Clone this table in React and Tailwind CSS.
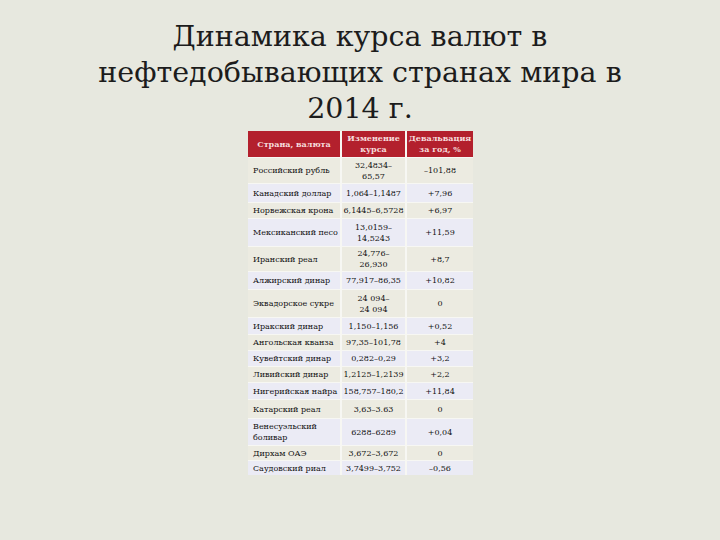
import React from "react";

const rows = [
  { c: "Российский рубль", r: "32,4834–\n65,57", d: "–101,88", h: "h-[25px]" },
  { c: "Канадский доллар", r: "1,064–1,1487", d: "+7,96", h: "h-[18px]" },
  { c: "Норвежская крона", r: "6,1445–6,5728", d: "+6,97", h: "h-[15px]" },
  { c: "Мексиканский песо", r: "13,0159–\n14,5243", d: "+11,59", h: "h-[27px]" },
  { c: "Иранский реал", r: "24,776–\n26,930", d: "+8,7", h: "h-[24px]" },
  { c: "Алжирский динар", r: "77,917–86,35", d: "+10,82", h: "h-[17px]" },
  { c: "Эквадорское сукре", r: "24 094–\n24 094", d: "0", h: "h-[27px]" },
  { c: "Иракский динар", r: "1,150–1,156", d: "+0,52", h: "h-[16px]" },
  { c: "Ангольская кванза", r: "97,35–101,78", d: "+4", h: "h-[15px]" },
  { c: "Кувейтский динар", r: "0,282–0,29", d: "+3,2", h: "h-[15px]" },
  { c: "Ливийский динар", r: "1,2125–1,2139", d: "+2,2", h: "h-[15px]" },
  { c: "Нигерийская найра", r: "158,757–180,2", d: "+11,84", h: "h-[16px]" },
  { c: "Катарский реал", r: "3,63–3.63", d: "0", h: "h-[18px]" },
  { c: "Венесуэльский\nболивар", r: "6288–6289", d: "+0,04", h: "h-[26px]" },
  { c: "Дирхам ОАЭ", r: "3,672–3,672", d: "0", h: "h-[14px]" },
  { c: "Саудовский риал", r: "3,7499–3,752", d: "–0,56", h: "h-[14px]" },
];

const App = () => {
  return (
    <div className="w-[720px] h-[540px] overflow-hidden bg-[#e7e8df] text-[#1c1c1c] font-['DejaVu_Serif',serif]">
      <h1 className="pt-[19px] text-center text-[28.5px] leading-[36px] font-normal">
        Динамика курса валют в
        <br />
        нефтедобывающих странах мира в
        <br />
        2014 г.
      </h1>
      <div className="mt-[4px] ml-[248px] w-[225px] flex flex-col gap-px bg-[#f7f7f3] text-[8px] leading-[11px] text-[#111]">
        <div className="flex h-[26px] gap-[2px] bg-[#f7f7f3] font-bold text-[#f6dcdc]">
          <div className="w-[92px] bg-[#b3202d] flex items-center justify-center">
            Страна, валюта
          </div>
          <div className="w-[63px] bg-[#b3202d] flex items-center justify-center text-center">
            Изменение
            <br />
            курса
          </div>
          <div className="flex-1 bg-[#b3202d] flex items-center justify-center text-center">
            Девальвация
            <br />
            за год, %
          </div>
        </div>
        {rows.map((row, i) => {
          const bg = i % 2 === 0 ? "bg-[#ecebe1]" : "bg-[#ebebf5]";
          return (
            <div key={row.c} className={`flex gap-[2px] ${row.h}`}>
              <div className={`w-[92px] ${bg} flex items-center pl-[5px] whitespace-pre-line`}>
                {row.c}
              </div>
              <div className={`w-[63px] ${bg} flex items-center justify-center text-center whitespace-pre-line`}>
                {row.r}
              </div>
              <div className={`flex-1 ${bg} flex items-center justify-center`}>
                {row.d}
              </div>
            </div>
          );
        })}
      </div>
    </div>
  );
};

export default App;
